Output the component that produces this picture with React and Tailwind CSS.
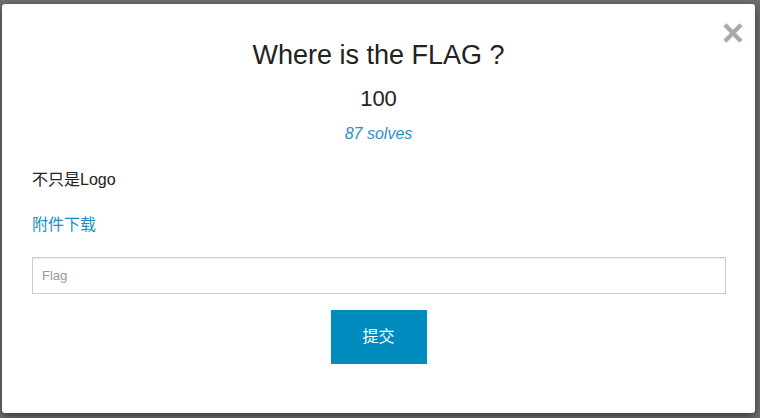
import React from 'react';

const font = { fontFamily: '"Liberation Sans", Arial, "Noto Sans CJK SC", sans-serif' };

export default function App() {
  return (
    <div className="w-[760px] h-[418px] bg-[#6e6e6e] pt-[4px] pl-[2px] overflow-hidden" style={font}>
      <div className="relative w-[753px] h-[409px] bg-white rounded-[3px] shadow-[0_3px_9px_rgba(0,0,0,0.5)] px-[30px]">
        <button className="absolute right-[11px] top-[10px] text-[#aaa] text-[38px] font-bold leading-none">
          ×
        </button>
        <div className="flex flex-col items-center pt-[35px]">
          <h3 className="text-[27px] leading-[32px] text-[#222]">Where is the FLAG ?</h3>
          <div className="mt-[14px] text-[22px] leading-[27px] text-[#222]">100</div>
          <div className="mt-[12px] text-[16px] leading-[20px] italic text-[#2d8fc6]">87 solves</div>
        </div>
        <p className="mt-[26px] text-[16px] leading-[20px] text-[#222]">不只是Logo</p>
        <a className="block mt-[25px] text-[16px] leading-[20px] text-[#1a8fc0]">附件下载</a>
        <input
          placeholder="Flag"
          className="block mt-[22px] w-[694px] h-[37px] border border-[#ccc] shadow-[inset_0_1px_1px_rgba(0,0,0,0.075)] px-[9px] text-[13px] text-[#555] placeholder:text-[#999] outline-none"
          style={font}
        />
        <div className="flex justify-center mt-[16px]">
          <button className="w-[96px] h-[54px] bg-[#008bbe] text-white text-[16px]">提交</button>
        </div>
      </div>
    </div>
  );
}
